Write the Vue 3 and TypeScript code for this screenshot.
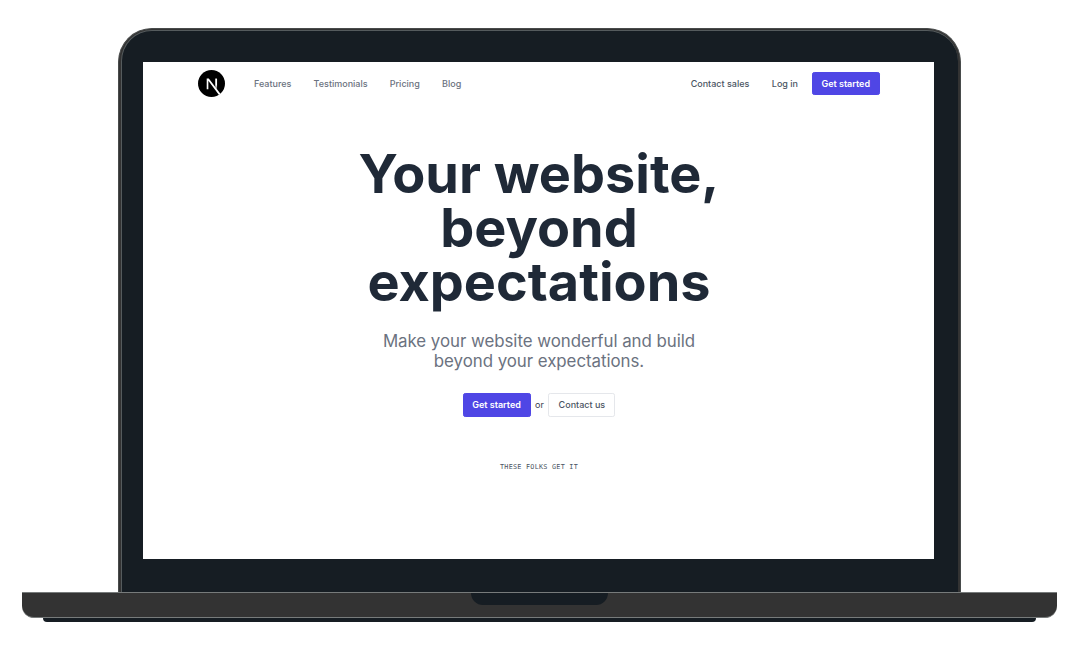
<script setup lang="ts">
const mainLinks: string[] = ['Features', 'Testimonials', 'Pricing', 'Blog']
const headline: string[] = ['Your website,', 'beyond', 'expectations']
const summary: string[] = ['Make your website wonderful and build', 'beyond your expectations.']
</script>

<template>
  <main class="stage">
    <div class="lid">
      <div class="bezel">
        <div class="screen">
          <header class="bar">
            <svg class="logo" viewBox="0 0 180 180" aria-hidden="true">
              <defs>
                <linearGradient id="stem" x1="121" y1="54" x2="120.8" y2="128" gradientUnits="userSpaceOnUse">
                  <stop stop-color="#fff" />
                  <stop offset="0.6" stop-color="#fff" />
                  <stop offset="1" stop-color="#fff" stop-opacity="0.3" />
                </linearGradient>
              </defs>
              <circle cx="90" cy="90" r="90" />
              <path d="M149.5 157.5 72.1 57H58v72h11V72.4l71 93.5a90 90 0 0 0 9.5-8.4Z" fill="#fff" />
              <path d="M115 57h12v71h-12Z" fill="url(#stem)" />
            </svg>
            <nav class="links">
              <a v-for="link in mainLinks" :key="link">{{ link }}</a>
            </nav>
            <div class="account">
              <a>Contact sales</a>
              <a>Log in</a>
              <button class="button primary">Get started</button>
            </div>
          </header>
          <section class="hero">
            <h1><span v-for="line in headline" :key="line">{{ line }}</span></h1>
            <p class="summary"><span v-for="line in summary" :key="line">{{ line }}</span></p>
            <div class="actions">
              <button class="button primary">Get started</button>
              <span class="or">or</span>
              <button class="button outline">Contact us</button>
            </div>
            <p class="folks">THESE FOLKS GET IT</p>
          </section>
        </div>
      </div>
    </div>
    <div class="base"><div class="notch"></div></div>
    <div class="foot"></div>
  </main>
</template>

<style>
body {
  background: #fff;
}
</style>

<style scoped>
.stage {
  box-sizing: border-box;
  width: 1080px;
  height: 663px;
  padding: 28px 23px 0 22px;
  display: flex;
  flex-direction: column;
  align-items: center;
  overflow: hidden;
  font-family: Inter, "Liberation Sans", sans-serif;
}
.lid {
  box-sizing: border-box;
  width: 843px;
  height: 564px;
  flex: none;
  padding: 1px 2px 0;
  border: 1px solid #484b4b;
  border-bottom: 0;
  border-radius: 34px 34px 0 0;
  background: #333;
}
.bezel {
  box-sizing: border-box;
  height: 562px;
  padding: 31px 21px 0;
  border: solid #555b5d;
  border-width: 1px 0 0 1px;
  border-radius: 31px 31px 0 0;
  background: #161d23;
}
.screen {
  box-sizing: border-box;
  width: 791px;
  height: 497px;
  padding: 9px 54px 0 55px;
  background: #fff;
}
.bar {
  display: flex;
  align-items: center;
  height: 25px;
  font-size: 9px;
  font-weight: 500;
  line-height: 13px;
}
.logo {
  width: 27px;
  height: 27px;
  flex: none;
}
.links {
  display: flex;
  gap: 22.2px;
  margin-left: 29px;
  color: #6b7280;
}
.account {
  display: flex;
  align-items: center;
  gap: 22.5px;
  margin-left: auto;
  color: #4b5563;
}
.account .button {
  margin-left: -9px;
}
.button {
  box-sizing: border-box;
  height: 23.5px;
  padding: 0;
  border: 1px solid #4f46e5;
  border-radius: 2.25px;
  font: 500 9px/20px Inter, "Liberation Sans", sans-serif;
  white-space: nowrap;
}
.primary {
  width: 68.5px;
  color: #fff;
  background: #4f46e5;
  font-weight: 600;
}
.outline {
  width: 67px;
  border-color: #e5e7eb;
  color: #4b5563;
  background: #fff;
}
.hero {
  display: flex;
  flex-direction: column;
  align-items: center;
  padding-top: 51px;
}
h1 {
  margin: 0;
  color: #1f2937;
  font-size: 54px;
  font-weight: 700;
  line-height: 54px;
  text-align: center;
}
h1 span,
.summary span {
  display: block;
  white-space: nowrap;
}
.summary {
  margin: 22px 0 0;
  color: #6b7280;
  font-size: 16.875px;
  font-weight: 400;
  line-height: 20.25px;
  letter-spacing: -0.04px;
  text-align: center;
}
.actions {
  display: flex;
  align-items: center;
  margin-top: 21.5px;
}
.actions .primary {
  width: 68px;
}
.or {
  margin: 0 4.5px;
  color: #374151;
  font-size: 9px;
  line-height: 13px;
}
.folks {
  margin: 45px 0 0;
  color: #4b5563;
  font-family: "DejaVu Sans Mono", monospace;
  font-size: 6.75px;
  line-height: 11px;
  letter-spacing: 0.27px;
}
.base {
  box-sizing: border-box;
  width: 1035px;
  height: 26px;
  flex: none;
  border: solid #777b7b;
  border-width: 1px 0;
  border-radius: 0 0 12px 12px;
  background: #333;
}
.notch {
  box-sizing: border-box;
  width: 137px;
  height: 12px;
  margin: 0 auto;
  border-radius: 0 0 12px 12px;
  background: #161d23;
}
.foot {
  width: 993px;
  height: 4px;
  flex: none;
  border-radius: 0 0 4px 4px;
  background: #161d23;
}
</style>
